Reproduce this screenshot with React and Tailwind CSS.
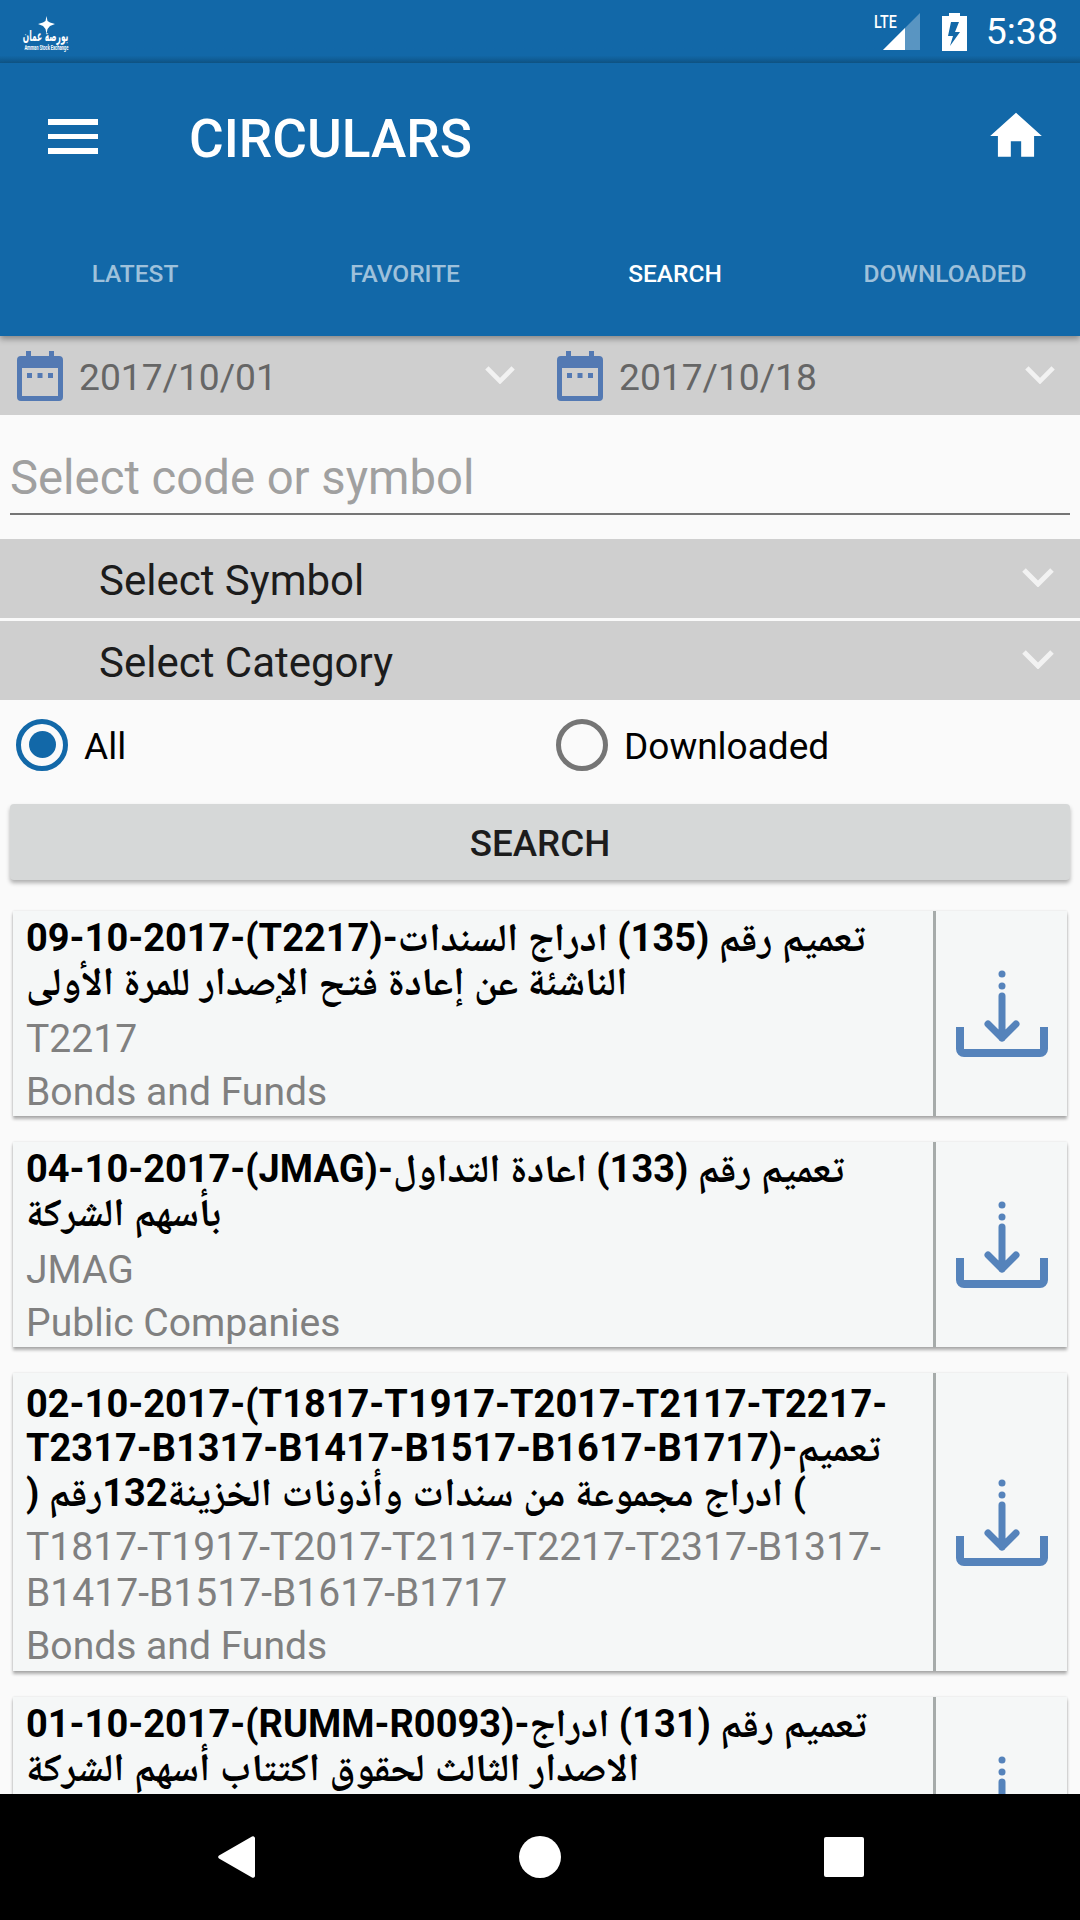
import React from 'react';

const font = "font-['Roboto','Noto_Naskh_Arabic','Noto_Sans_Arabic','DejaVu_Sans',sans-serif]";

const circulars = [
  {
    lines: ['09-10-2017-(T2217)-تعميم رقم (135) ادراج السندات', 'الناشئة عن إعادة فتح الإصدار للمرة الأولى'],
    codes: ['T2217'],
    category: 'Bonds and Funds',
    pad: 'pt-[5px] pb-[1px]',
    titleGap: 'mb-[11px]',
  },
  {
    lines: ['04-10-2017-(JMAG)-تعميم رقم (133) اعادة التداول', 'بأسهم الشركة'],
    codes: ['JMAG'],
    category: 'Public Companies',
    pad: 'pt-[5px] pb-[1px]',
    titleGap: 'mb-[11px]',
  },
  {
    lines: ['02-10-2017-(T1817-T1917-T2017-T2117-T2217-', 'T2317-B1317-B1417-B1517-B1617-B1717)-تعميم', ') ادراج مجموعة من سندات وأذونات الخزينة132رقم ('],
    codes: ['T1817-T1917-T2017-T2117-T2217-T2317-B1317-', 'B1417-B1517-B1617-B1717'],
    category: 'Bonds and Funds',
    rtlLast: true,
    pad: 'pt-[9px] pb-[1.5px]',
    titleGap: 'mb-[9px]',
  },
  {
    // only the title of this row is above the navigation bar
    lines: ['01-10-2017-(RUMM-R0093)-تعميم رقم (131) ادراج', 'الاصدار الثالث لحقوق اكتتاب أسهم الشركة'],
    codes: [],
    pad: 'pt-[5px] h-[205px]',
    titleGap: '',
  },
];

// Arabic runs get no line height of their own, so the fallback font's metrics don't stretch the lines
function TitleLine({ text }) {
  const parts = text.split(/([\u0600-\u06FF]+(?: [\u0600-\u06FF]+)*)/);
  return parts.map((part, i) =>
    i % 2 === 1 ? (
      <span key={i} className="text-[39.3px] leading-[0]">
        {part}
      </span>
    ) : (
      part
    ),
  );
}

function Chevron({ className }) {
  return (
    <svg className={className} viewBox="0 0 32 20" fill="none" stroke="currentColor" strokeWidth="5">
      <path d="M2 3l14 14L30 3" />
    </svg>
  );
}

function CalendarIcon() {
  return (
    <svg className="w-[46px] h-[50px] shrink-0" viewBox="0 0 46 50" fill="#5379b3">
      <path d="M9 0h5v5h18V0h5v5h5a4 4 0 0 1 4 4v37a4 4 0 0 1-4 4H4a4 4 0 0 1-4-4V9a4 4 0 0 1 4-4h5zM5 17v28h36V17z" fillRule="evenodd" />
      <rect x="10" y="22" width="5" height="5" />
      <rect x="20.5" y="22" width="5" height="5" />
      <rect x="31" y="22" width="5" height="5" />
    </svg>
  );
}

function DownloadIcon() {
  return (
    <svg className="w-[92px] h-[88px]" viewBox="0 0 92 88" fill="none" stroke="#5583bb" strokeLinecap="round" strokeLinejoin="round">
      <circle cx="46" cy="5" r="3.5" fill="#5583bb" stroke="none" />
      <circle cx="46" cy="17" r="3.5" fill="#5583bb" stroke="none" />
      <path d="M46 27v42M32 55l14 14 14-14" strokeWidth="7" />
      <path d="M4 58v22a4 4 0 0 0 4 4h76a4 4 0 0 0 4-4V58" strokeWidth="8" strokeLinecap="butt" />
    </svg>
  );
}

function DateField({ value }) {
  return (
    <div className="w-1/2 flex items-center pl-[17px] pr-[25px]">
      <CalendarIcon />
      <span className="ml-[16px] flex-1 pt-[4px] text-[37.2px] text-[#666666]">{value}</span>
      <Chevron className="w-[30px] h-[19px] text-[#f2f2f2] -mt-[3px]" />
    </div>
  );
}

function SelectRow({ label }) {
  return (
    <div className="h-[78.5px] bg-[#cfcfcf] flex items-center pl-[99px] pr-[26px]">
      <span className="flex-1 pt-[4px] text-[42px] text-[#1c1c1c]">{label}</span>
      <Chevron className="w-[32px] h-[20px] text-[#f2f2f2] -mt-[3px]" />
    </div>
  );
}

function Radio({ label, checked }) {
  return (
    <div className="w-1/2 flex items-center pl-[16px]">
      {checked ? (
        <span className="w-[52px] h-[52px] rounded-full border-[5px] border-[#1268a8] flex items-center justify-center">
          <span className="w-[27px] h-[27px] rounded-full bg-[#1268a8]" />
        </span>
      ) : (
        <span className="w-[52px] h-[52px] rounded-full border-[5px] border-[#757575]" />
      )}
      <span className="ml-[16px] pt-[4px] text-[37px] text-black">{label}</span>
    </div>
  );
}

function CircularCard({ item }) {
  return (
    <div className="flex shrink-0 bg-[#f5f7f7] shadow-[0_3px_3px_rgba(0,0,0,0.3),0_0_2px_rgba(0,0,0,0.12)]">
      <div className={`flex-1 min-w-0 pl-[13px] pr-[10px] ${item.pad}`}>
        <div className={`${item.titleGap} text-[38px] leading-[44.5px] font-bold text-black whitespace-nowrap`}>
          {item.lines.map((line, i) => (
            <div key={i} dir={item.rtlLast && i === item.lines.length - 1 ? 'rtl' : 'ltr'} className="w-fit">
              <TitleLine text={line} />
            </div>
          ))}
        </div>
        <div className="text-[39.1px] leading-[46px] text-[#808080] whitespace-nowrap">
          {item.codes.map((code) => (
            <div key={code}>{code}</div>
          ))}
        </div>
        {item.category && <div className="mt-[7px] text-[39.1px] leading-[46px] text-[#808080]">{item.category}</div>}
      </div>
      <div className="w-[134px] shrink-0 border-l-[3px] border-[#a6abaa] flex items-center justify-center">
        <DownloadIcon />
      </div>
    </div>
  );
}

export default function App() {
  return (
    <div className={`${font} w-[1080px] h-[1920px] flex flex-col bg-[#fafafa] overflow-hidden`}>
      {/* Status bar */}
      <div className="h-[63px] shrink-0 flex items-center bg-linear-to-b from-[#1268a8] from-[88%] to-[#0f5688] pl-[23px] pr-[22px]">
        <div className="w-[46px] pt-[5px] flex flex-col items-center text-white">
          <svg className="w-[17px] h-[18px] -mb-[5px]" viewBox="0 0 17 18" fill="white">
            <path d="M8.5 0l1 5 2.500 1.500 5 1.500-5 2-2.500 3-1 5-1-5-2.500-3-5-2 5-1.500 2.500-1.500z" />
          </svg>
          <span className="text-[15px] leading-[15px] font-bold whitespace-nowrap scale-x-50 font-['DejaVu_Sans',sans-serif]">بورصة عمان</span>
          <span className="text-[6.5px] leading-[8px] font-bold whitespace-nowrap scale-x-[0.62]">Amman Stock Exchange</span>
        </div>
        <div className="ml-auto flex items-center">
          <div className="relative w-[46px] h-[37px]">
            <span className="absolute left-0 -top-[1px] text-[19px] leading-[19px] font-medium text-white scale-x-75 origin-left">LTE</span>
            <svg className="absolute left-[9px] top-0 w-[37px] h-[37px]" viewBox="0 0 37 37">
              <path d="M0 37L37 0v37z" fill="white" fillOpacity="0.3" />
              <path d="M0 37l22-22v22z" fill="white" />
            </svg>
          </div>
          <svg className="ml-[22px] w-[25px] h-[38px]" viewBox="0 0 25 38">
            <path d="M7 0h11v3h7v35H0V3h7z" fill="white" />
            <path d="M9 9h8l-4 10h5L8 33l3-10H6z" fill="#1268a8" />
          </svg>
          <span className="ml-[19px] text-[37.5px] text-white">5:38</span>
        </div>
      </div>

      {/* Toolbar and tabs */}
      <div className="relative z-10 h-[273px] shrink-0 bg-[#1268a8] shadow-[0_3px_6px_rgba(0,0,0,0.35)]">
        <div className="h-[147px] flex items-center pl-[48px] pr-[33px]">
          <div className="w-[50px] flex flex-col gap-[9px]">
            <div className="h-[5.500px] bg-white" />
            <div className="h-[5.500px] bg-white" />
            <div className="h-[5.500px] bg-white" />
          </div>
          <h1 className="ml-[91px] flex-1 pt-[7px] text-[53.2px] font-medium text-white">CIRCULARS</h1>
          <svg className="w-[62px] h-[62px] -mt-[2px]" viewBox="0 0 24 24" fill="white">
            <path d="M10 20v-6h4v6h5v-8h3L12 3 2 12h3v8z" />
          </svg>
        </div>
        <div className="grid grid-cols-4 pt-[46px] text-center text-[24.500px] font-medium text-white/60">
          <span>LATEST</span>
          <span>FAVORITE</span>
          <span className="text-white">SEARCH</span>
          <span>DOWNLOADED</span>
        </div>
      </div>

      {/* Date range */}
      <div className="h-[79px] shrink-0 flex bg-[#cfcfcf]">
        <DateField value="2017/10/01" />
        <DateField value="2017/10/18" />
      </div>

      {/* Search input */}
      <div className="h-[124px] shrink-0 px-[10px] pt-[36px]">
        <div className="h-[64px] border-b-2 border-[#757575] text-[47.25px] leading-[54px] text-[#a0a0a0]">
          Select code or symbol
        </div>
      </div>

      <div className="shrink-0 flex flex-col gap-[3.500px]">
        <SelectRow label="Select Symbol" />
        <SelectRow label="Select Category" />
      </div>

      <div className="h-[104px] shrink-0 flex items-center pb-[14px]">
        <Radio label="All" checked />
        <Radio label="Downloaded" />
      </div>

      <button className="mx-[10px] h-[76px] shrink-0 rounded-[4px] bg-[#d6d8d8] pt-[5px] text-[36.75px] font-medium text-[#1c1c1c] shadow-[0_3px_4px_rgba(0,0,0,0.3)]">
        SEARCH
      </button>

      {/* Results */}
      <div className="flex-1 min-h-0 overflow-hidden flex flex-col gap-[26px] pt-[31px] px-[13px]">
        {circulars.map((item, i) => (
          <CircularCard key={i} item={item} />
        ))}
      </div>

      {/* Navigation bar */}
      <div className="relative z-10 h-[126px] shrink-0 bg-black flex items-center justify-center">
        <svg className="absolute left-[218px] top-[42px] w-[37px] h-[42px]" viewBox="0 0 37 42" fill="white">
          <path d="M37 2v38a2 2 0 0 1-3 1.500L1 22.500a2 2 0 0 1 0-3L34 .500A2 2 0 0 1 37 2z" />
        </svg>
        <div className="w-[42px] h-[42px] rounded-full bg-white" />
        <div className="absolute left-[824px] top-[43px] w-[40px] h-[40px] rounded-[2px] bg-white" />
      </div>
    </div>
  );
}
